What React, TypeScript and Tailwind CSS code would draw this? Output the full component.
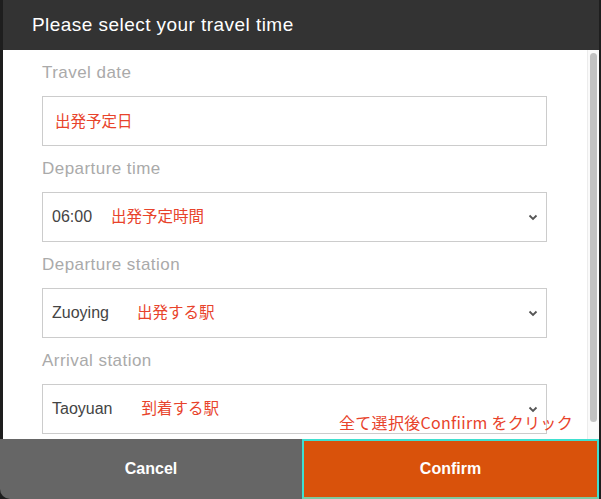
import React from 'react';

const Chevron = () => (
    <svg width="10" height="7" viewBox="0 0 10 7" className="shrink-0">
        <polyline points="1.5,1.5 5,5 8.5,1.5" fill="none" stroke="#555" strokeWidth="1.8" />
    </svg>
);

const Label = ({ children }: { children: React.ReactNode }) => (
    <div className="h-[46px] flex items-center text-[17px] tracking-[0.45px] text-[#aaaaaa]">{children}</div>
);

const Note = ({ children, className = '' }: { children: React.ReactNode; className?: string }) => (
    <span className={`text-[15.5px] text-[#e8432b] ${className}`} style={{ fontFamily: '"Noto Sans CJK JP", "Liberation Sans", sans-serif' }}>
        {children}
    </span>
);

const SelectBox = ({ value, note, noteGap }: { value: string; note: string; noteGap: string }) => (
    <div className="h-[50px] border border-[#cccccc] bg-white flex items-center pl-[9px] pr-[8px]">
        <span className="text-[16px] text-[#444444]">{value}</span>
        <Note className={`${noteGap} -mt-[3px]`}>{note}</Note>
        <div className="flex-1" />
        <Chevron />
    </div>
);

export default function App() {
    return (
        <div className="w-[601px] h-[499px] bg-[#1e1e1e] flex flex-col overflow-hidden" style={{ fontFamily: '"Liberation Sans", Arial, sans-serif' }}>
            {/* HEADER */}
            <div className="h-[50px] shrink-0 bg-[#333333] ml-[3px] mr-[2px] flex items-center pl-[29px] text-[19px] tracking-[0.45px] text-white">
                Please select your travel time
            </div>

            {/* BODY */}
            <div className="relative flex-1 flex bg-white ml-[3px] mr-[2px] min-h-0">
                <div className="flex-1 pl-[39px] pr-[40px]">
                    <Label>Travel date</Label>
                    <div className="h-[50px] border border-[#cccccc] bg-white flex items-center pl-[12px]">
                        <Note>出発予定日</Note>
                    </div>

                    <Label>Departure time</Label>
                    <SelectBox value="06:00" note="出発予定時間" noteGap="ml-[19px]" />

                    <Label>Departure station</Label>
                    <SelectBox value="Zuoying" note="出発する駅" noteGap="ml-[28px]" />

                    <Label>Arrival station</Label>
                    <SelectBox value="Taoyuan" note="到着する駅" noteGap="ml-[29px]" />
                </div>

                {/* SCROLLBAR */}
                <div className="w-[12px] border-l border-[#ececec] bg-[#fafafa] pt-[3px] flex justify-center">
                    <div className="w-[7px] h-[369px] rounded-full bg-[#c2c2c2]" />
                </div>

                <Note className="absolute left-[336px] top-[360px] text-[16px] tracking-[0.3px]">全て選択後Confiirm をクリック</Note>
            </div>

            {/* FOOTER */}
            <div className="h-[60px] shrink-0 flex">
                <button className="w-[302px] bg-[#666666] rounded-bl-[10px] text-white font-bold text-[16px]">
                    Cancel
                </button>
                <button className="flex-1 mr-[2px] bg-[#d9520b] border-2 border-[#3fe0d0] border-b-[#7ccaa0] text-white font-bold text-[16px]">
                    Confirm
                </button>
            </div>
        </div>
    );
}
